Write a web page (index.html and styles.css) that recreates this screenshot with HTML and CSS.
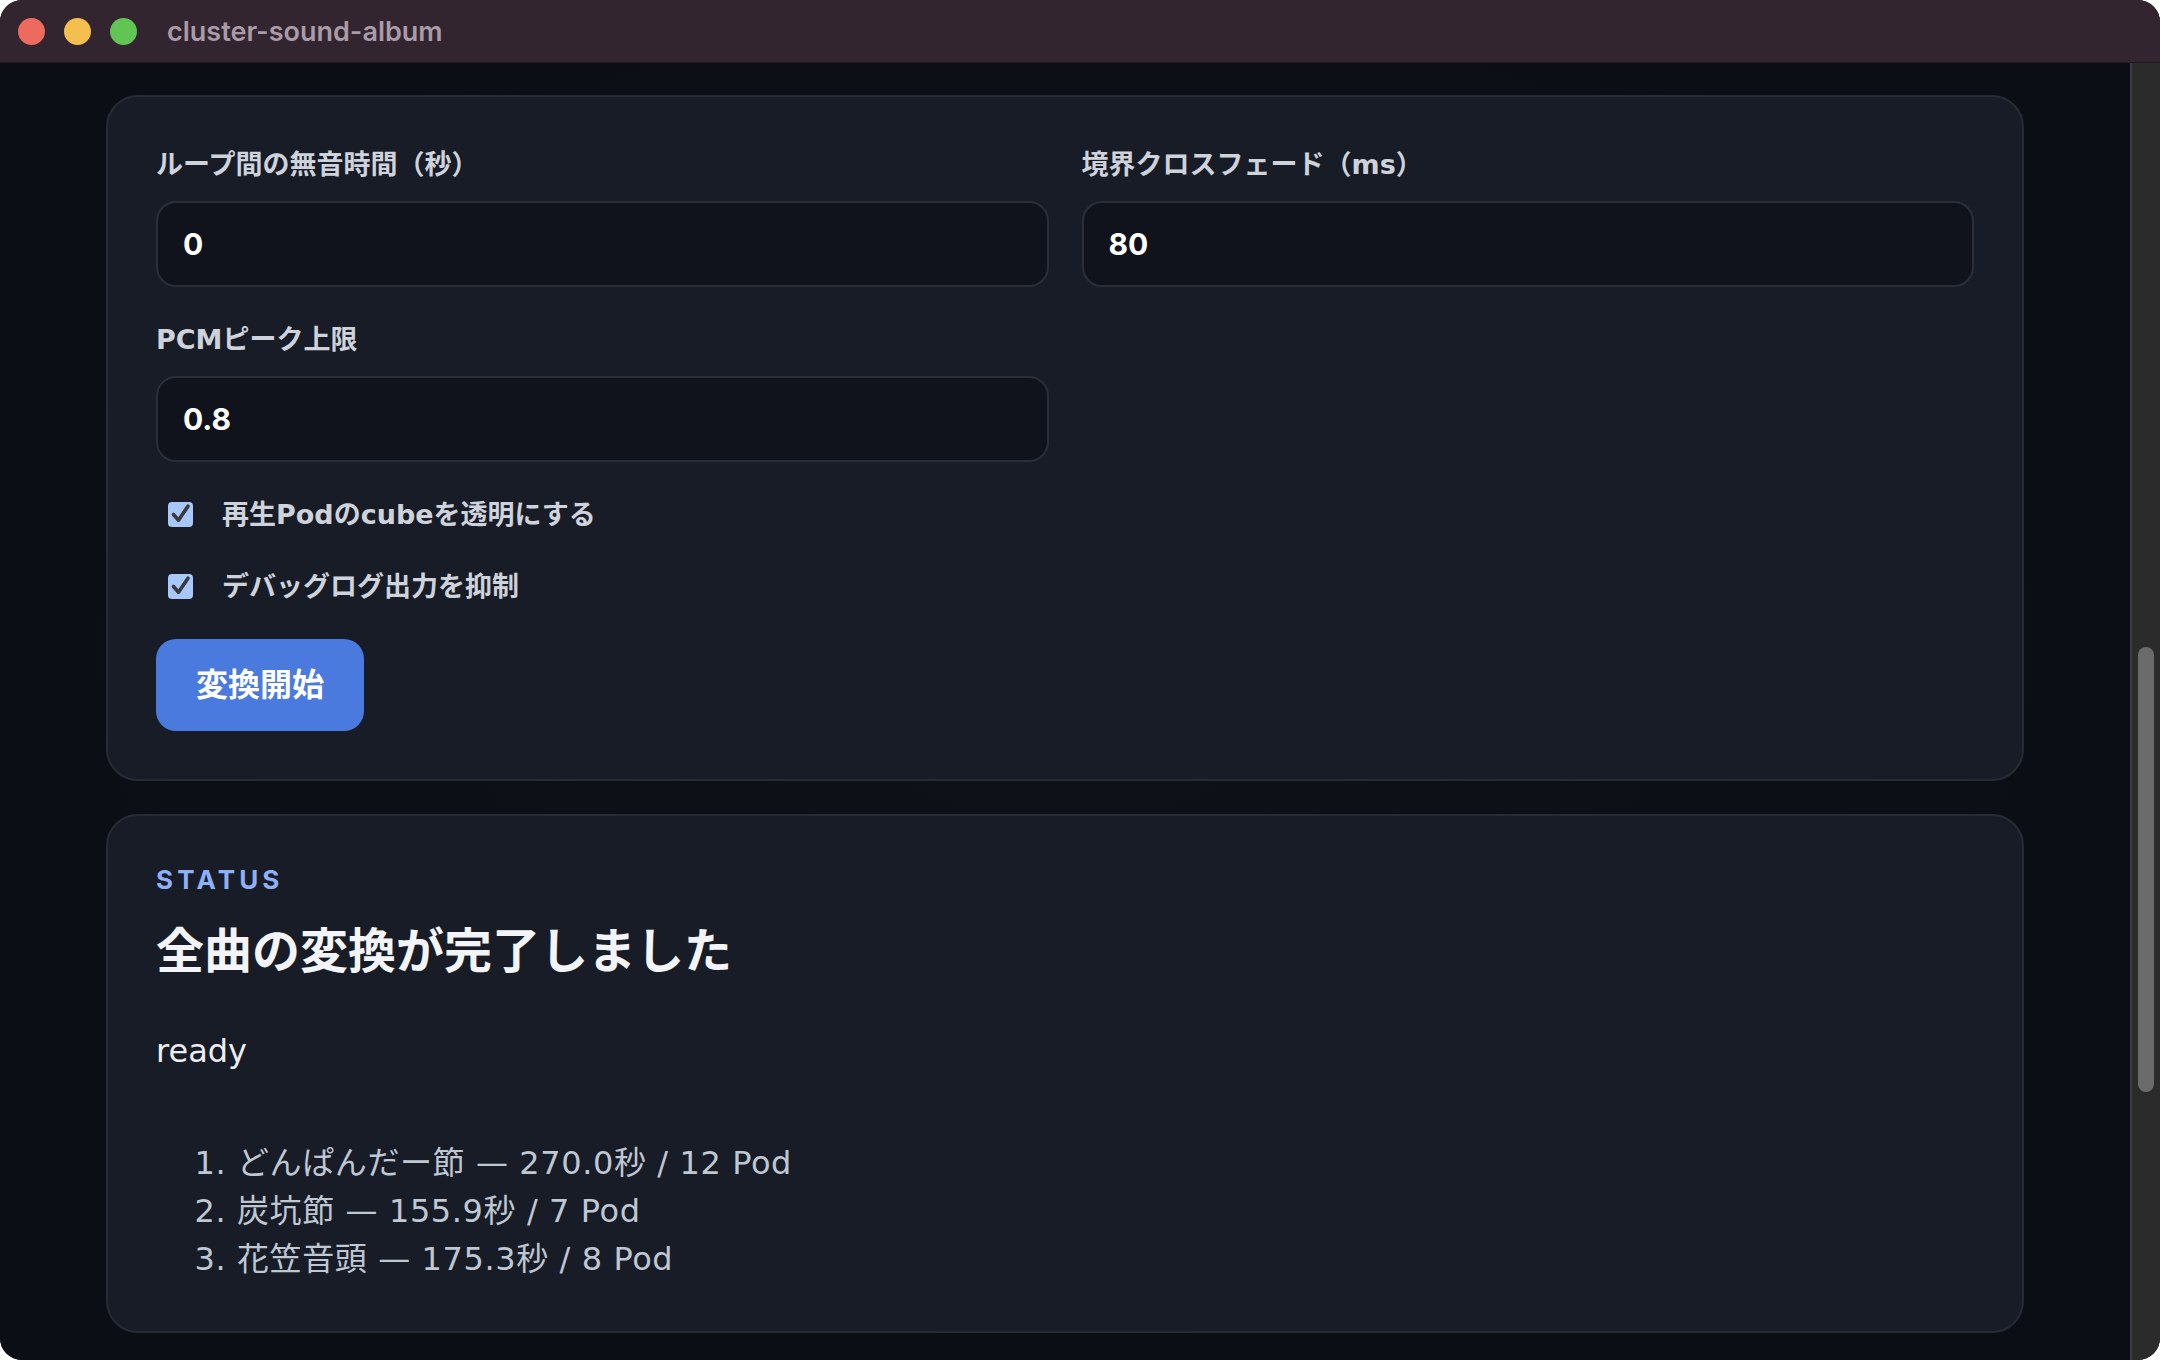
FILE: index.html
```html
<!DOCTYPE html>
<html lang="ja">
<head>
<meta charset="utf-8">
<title>cluster-sound-album</title>
<link rel="stylesheet" href="styles.css">
</head>
<body>
<div class="window">
  <div class="titlebar">
    <span class="light red"></span>
    <span class="light yellow"></span>
    <span class="light green"></span>
    <span class="title">cluster-sound-album</span>
  </div>
  <div class="main">
    <div class="content">
      <section class="card form">
        <div class="grid">
          <div class="field">
            <label class="label">ループ間の無音時間（秒）</label>
            <input class="input" type="text" value="0">
          </div>
          <div class="field">
            <label class="label">境界クロスフェード（ms）</label>
            <input class="input" type="text" value="80">
          </div>
          <div class="field">
            <label class="label">PCMピーク上限</label>
            <input class="input" type="text" value="0.8">
          </div>
        </div>
        <label class="check">
          <span class="box"><svg viewBox="0 0 25 25" width="25" height="25"><path d="M5.5 12.5 L10.5 18.2 L20 4.2" fill="none" stroke="#3a3a3c" stroke-width="3.6" stroke-linecap="round" stroke-linejoin="round"/></svg></span>
          <span>再生Podのcubeを透明にする</span>
        </label>
        <label class="check">
          <span class="box"><svg viewBox="0 0 25 25" width="25" height="25"><path d="M5.5 12.5 L10.5 18.2 L20 4.2" fill="none" stroke="#3a3a3c" stroke-width="3.6" stroke-linecap="round" stroke-linejoin="round"/></svg></span>
          <span>デバッグログ出力を抑制</span>
        </label>
        <div><button class="button">変換開始</button></div>
      </section>
      <section class="card status">
        <div class="eyebrow">STATUS</div>
        <h2 class="heading">全曲の変換が完了しました</h2>
        <p class="message">ready</p>
        <ol class="tracks">
          <li>どんぱんだー節 — 270.0秒 / 12 Pod</li>
          <li>炭坑節 — 155.9秒 / 7 Pod</li>
          <li>花笠音頭 — 175.3秒 / 8 Pod</li>
        </ol>
      </section>
    </div>
    <div class="scrollbar"><div class="thumb"></div></div>
  </div>
</div>
</body>
</html>
```
FILE: styles.css
```css
* { box-sizing: border-box; }
html, body { margin: 0; padding: 0; background: #ffffff; }
body {
  font-family: "DejaVu Sans", "Noto Sans CJK JP", sans-serif;
  width: 2160px;
  height: 1360px;
  overflow: hidden;
}
.window {
  width: 2160px;
  height: 1360px;
  border-radius: 22px;
  overflow: hidden;
  background: #0b0e14;
  display: flex;
  flex-direction: column;
}
.titlebar {
  height: 63px;
  flex: none;
  background: #32252f;
  border-bottom: 1px solid #231a21;
  display: flex;
  align-items: center;
  padding-left: 18px;
  gap: 19px;
}
.light {
  width: 27px;
  height: 27px;
  border-radius: 50%;
  display: block;
}
.red { background: #ec6a5e; }
.yellow { background: #f4bf4f; }
.green { background: #61c554; }
.title {
  margin-left: 11px;
  font-family: "Inter", "Noto Sans CJK JP", sans-serif;
  font-size: 27px;
  font-weight: 600;
  color: #a99ba7;
}
.main {
  flex: 1;
  display: flex;
  min-height: 0;
}
.content {
  flex: 1;
  padding: 32px 106px 0;
  display: flex;
  flex-direction: column;
  gap: 33px;
  overflow: hidden;
  background: radial-gradient(ellipse at 50% 45%, #0e1118 0%, #0b0e14 70%);
}
.scrollbar {
  width: 30px;
  flex: none;
  background: #2b2b2b;
  border-left: 2px solid #3b3b3b;
  padding: 584px 6px 0;
}
.thumb {
  width: 16px;
  height: 445px;
  border-radius: 8px;
  background: #6b6b6b;
}
.card {
  background: #181c26;
  border: 2px solid #272b35;
  border-radius: 32px;
  padding: 48px;
  flex: none;
}
.form {
  display: flex;
  flex-direction: column;
  gap: 33px;
}
.grid {
  display: grid;
  grid-template-columns: 1fr 1fr;
  gap: 33px;
}
.field {
  display: flex;
  flex-direction: column;
}
.label {
  font-size: 27px;
  line-height: 39px;
  font-weight: 700;
  color: #cdd2db;
  margin-bottom: 17px;
}
.input {
  height: 86px;
  width: 100%;
  border: 2px solid #2a2e38;
  border-radius: 20px;
  background: #10131b;
  color: #ffffff;
  font-family: "Inter", "Noto Sans CJK JP", sans-serif;
  font-size: 30px;
  font-weight: 700;
  padding: 0 25px;
  outline: none;
}
.check {
  display: flex;
  align-items: center;
  gap: 29px;
  padding-left: 12px;
  font-size: 27px;
  line-height: 39px;
  font-weight: 700;
  color: #cdd2db;
}
.box {
  width: 25px;
  height: 25px;
  border-radius: 4px;
  background: #a8c7fa;
  display: block;
  flex: none;
}
.box svg { display: block; }
.button {
  border: none;
  border-radius: 20px;
  background: #4a7ade;
  color: #ffffff;
  font-family: "Inter", "Noto Sans CJK JP", sans-serif;
  font-size: 32px;
  line-height: 38px;
  font-weight: 700;
  padding: 27px 40px;
  cursor: pointer;
}
.eyebrow {
  font-family: "Inter", sans-serif;
  font-size: 26px;
  line-height: 31px;
  font-weight: 700;
  letter-spacing: 0.16em;
  color: #8db0f6;
}
.heading {
  margin: 26px 0 0;
  font-size: 48px;
  line-height: 61px;
  font-weight: 700;
  color: #f2f4f7;
}
.message {
  margin: 45px 0 0;
  font-size: 32px;
  line-height: 48px;
  color: #eceef2;
}
.tracks {
  margin: 64px 0 0;
  padding-left: 81px;
  font-size: 32px;
  line-height: 48px;
  letter-spacing: 0.6px;
  color: #bfc7d3;
}
```
